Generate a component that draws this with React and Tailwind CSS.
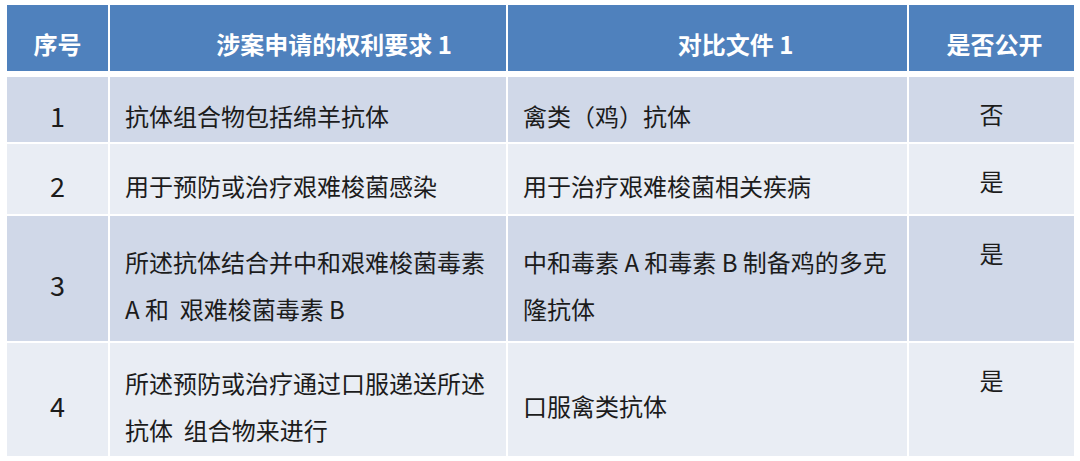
const FONT = { fontFamily: '"Noto Sans CJK SC", "Noto Sans", sans-serif' };

// column widths in px, matching the reference grid
const COLS = ["w-[101px]", "w-[396px]", "w-[399px]", "w-[165px]"];

const rows = [
  {
    no: "1",
    h: "h-[65px]",
    bg: "bg-[#d0d8e8]",
    claim: ["抗体组合物包括绵羊抗体"],
    doc: ["禽类（鸡）抗体"],
    open: "否",
  },
  {
    no: "2",
    h: "h-[70px]",
    bg: "bg-[#e9edf4]",
    claim: ["用于预防或治疗艰难梭菌感染"],
    doc: ["用于治疗艰难梭菌相关疾病"],
    open: "是",
  },
  {
    no: "3",
    h: "h-[125px]",
    bg: "bg-[#d0d8e8]",
    claim: ["所述抗体结合并中和艰难梭菌毒素", "A 和  艰难梭菌毒素 B"],
    doc: ["中和毒素 A 和毒素 B 制备鸡的多克", "隆抗体"],
    open: "是",
  },
  {
    no: "4",
    h: "h-[113px]",
    bg: "bg-[#e9edf4]",
    claim: ["所述预防或治疗通过口服递送所述", "抗体  组合物来进行"],
    doc: ["口服禽类抗体"],
    open: "是",
  },
];

// ── Header cell ────────────────────────────────────────────────────────────────
const Head = ({ w, pad = "", children }) => (
  <div className={`${w} ${pad} flex-shrink-0 bg-[#4f81bd] flex items-center justify-center
                   pt-[10px] text-[24px] font-bold text-white leading-[47px]`}>
    {children}
  </div>
);

// ── Text cell (multi line) ─────────────────────────────────────────────────────
const TextCell = ({ w, bg, lines }) => (
  <div className={`${w} ${bg} flex-shrink-0 flex items-center px-[15px] pt-[12px]`}>
    <div className="text-[24px] leading-[47px] text-[#1c1c1c] whitespace-pre">
      {lines.map((l, i) => (
        <div key={i}>{l}</div>
      ))}
    </div>
  </div>
);

export default function App() {
  return (
    <div className="w-[1080px] h-[461px] bg-white pt-[5px] pl-[7px]" style={FONT}>
      <div className="flex flex-col gap-[2px]">

        {/* Header */}
        <div className="flex gap-[2px] h-[66px] mb-[4px]">
          <Head w={COLS[0]}>序号</Head>
          <Head w={COLS[1]} pad="pl-[52px]">涉案申请的权利要求 1</Head>
          <Head w={COLS[2]} pad="pl-[56px]">对比文件 1</Head>
          <Head w={COLS[3]} pad="pl-[6px]">是否公开</Head>
        </div>

        {/* Body rows */}
        {rows.map((r) => (
          <div key={r.no} className={`flex gap-[2px] ${r.h}`}>
            <div className={`${COLS[0]} ${r.bg} flex-shrink-0 flex items-center justify-center
                             pt-[12px] text-[27px] leading-[47px] text-[#1c1c1c]`}>
              {r.no}
            </div>
            <TextCell w={COLS[1]} bg={r.bg} lines={r.claim} />
            <TextCell w={COLS[2]} bg={r.bg} lines={r.doc} />
            <div className={`${COLS[3]} ${r.bg} flex-shrink-0 flex justify-center
                             pt-[13px] text-[24px] leading-[47px] text-[#1c1c1c]`}>
              {r.open}
            </div>
          </div>
        ))}

      </div>
    </div>
  );
}
